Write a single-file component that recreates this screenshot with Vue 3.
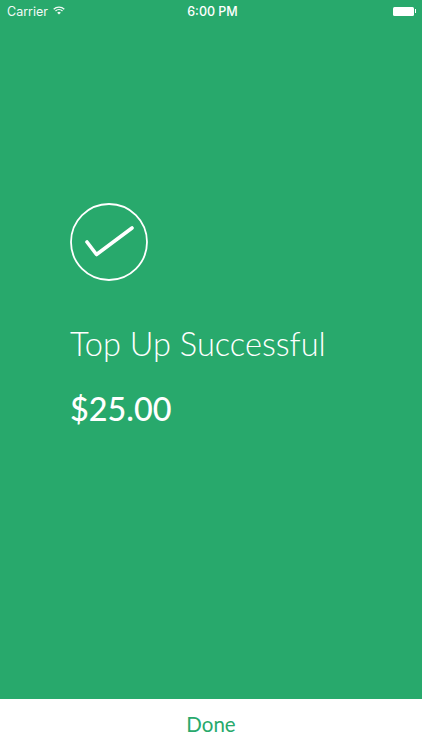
<template>
  <div class="screen">
    <div class="status-bar">
      <div class="status-left">
        <span>Carrier</span>
        <svg class="wifi" width="12" height="9" viewBox="0 0 14 10">
          <path d="M0.8 3.6 A9 9 0 0 1 13.2 3.6" fill="none" stroke="#fff" stroke-width="1.5" />
          <path d="M2.9 5.6 A6 6 0 0 1 11.1 5.6" fill="none" stroke="#fff" stroke-width="1.5" />
          <path d="M4.9 7.5 A3.2 3.2 0 0 1 9.1 7.5 L7 9.8 Z" fill="#fff" />
        </svg>
      </div>
      <div class="status-time">6:00 PM</div>
      <div class="status-right">
        <div class="battery"></div>
        <div class="battery-tip"></div>
      </div>
    </div>

    <div class="content">
      <svg class="check" width="78" height="78" viewBox="0 0 78 78">
        <circle cx="39" cy="39" r="38" fill="none" stroke="#fff" stroke-width="1.8" />
        <path d="M17 39 L26.5 51.5 L62 25" fill="none" stroke="#fff" stroke-width="3.6" stroke-linecap="round" stroke-linejoin="round" />
      </svg>
      <h1 class="title">Top Up Successful</h1>
      <p class="amount">{{ amount }}</p>
    </div>

    <button class="done">Done</button>
  </div>
</template>

<script setup>
const amount = '$25.00'
</script>

<style>
html,
body {
  margin: 0;
  background: #fff;
}
</style>

<style scoped>
.screen {
  display: flex;
  flex-direction: column;
  width: 422px;
  height: 750px;
  background-color: #28a96c;
  color: #fff;
  font-family: Lato, sans-serif;
  overflow: hidden;
}

.status-bar {
  display: grid;
  grid-template-columns: 1fr auto 1fr;
  align-items: center;
  height: 22px;
  padding: 0 6px 0 7px;
  font-family: Inter, "Liberation Sans", sans-serif;
  font-size: 12.5px;
  flex-shrink: 0;
}

.status-left {
  display: flex;
  align-items: center;
  gap: 5px;
  opacity: 0.95;
}

.wifi {
  margin-top: -2px;
}

.status-time {
  margin-left: 2px;
  font-weight: 500;
}

.status-right {
  display: flex;
  align-items: center;
  justify-content: flex-end;
}

.battery {
  width: 21px;
  height: 9px;
  background-color: #fff;
  border-radius: 1.5px;
}

.battery-tip {
  width: 1.5px;
  height: 4px;
  margin-left: 1px;
  background-color: #fff;
}

.content {
  flex: 1;
  padding: 181px 0 0 70px;
}

.check {
  display: block;
}

.title {
  margin: 43px 0 0;
  font-size: 32.6px;
  line-height: 40px;
  font-weight: 300;
}

.amount {
  margin: 25px 0 0;
  font-size: 32.4px;
  line-height: 40px;
  font-weight: 500;
}

.done {
  flex-shrink: 0;
  height: 51px;
  padding: 0 0 2px;
  border: none;
  background-color: #fff;
  color: #28a96c;
  font-family: Lato, sans-serif;
  font-size: 20.5px;
}
</style>
